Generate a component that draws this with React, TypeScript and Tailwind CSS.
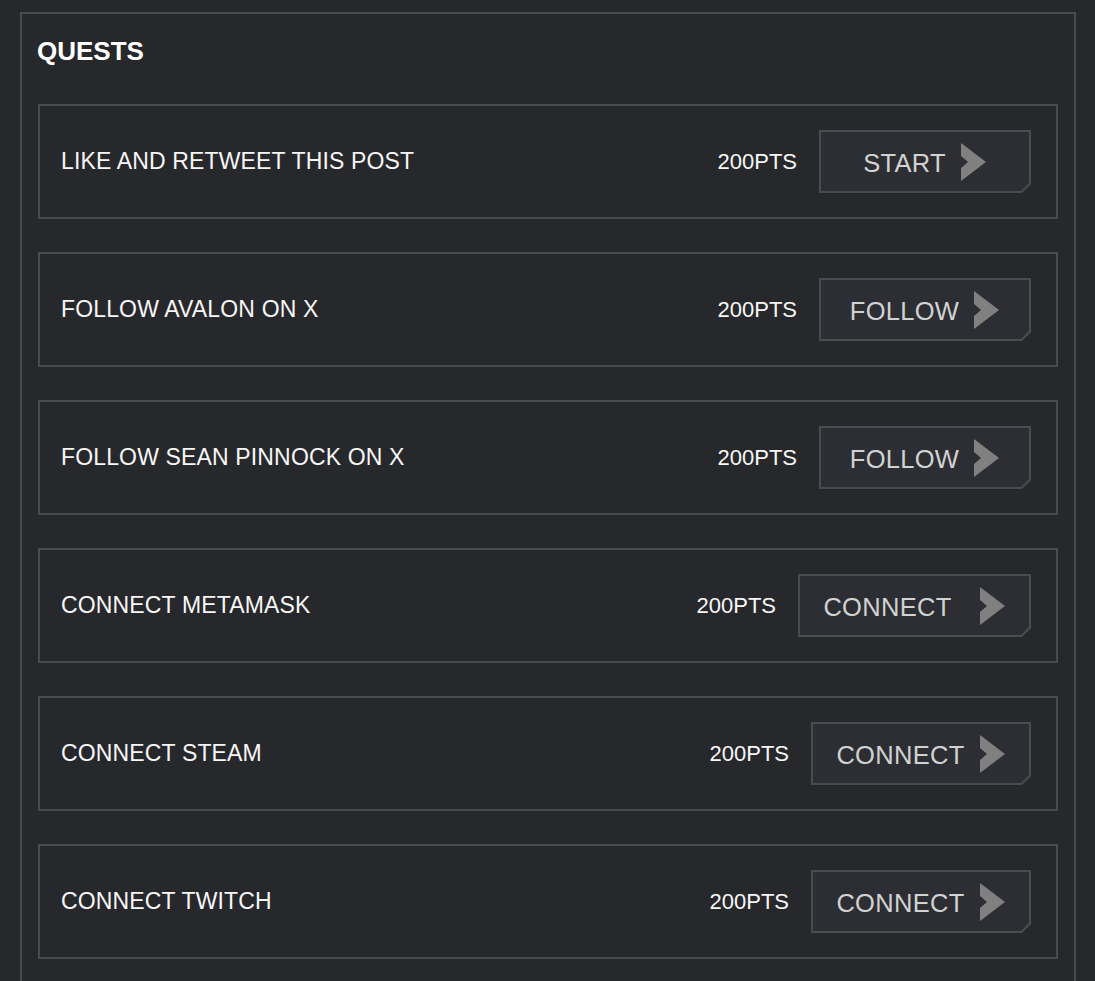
interface Quest {
  title: string;
  points: string;
  action: string;
  width: string;
  gap: string;
}

const quests: Quest[] = [
  { title: "LIKE AND RETWEET THIS POST", points: "200PTS", action: "START", width: "w-[212px]", gap: "gap-[15px]" },
  { title: "FOLLOW AVALON ON X", points: "200PTS", action: "FOLLOW", width: "w-[212px]", gap: "gap-[15px]" },
  { title: "FOLLOW SEAN PINNOCK ON X", points: "200PTS", action: "FOLLOW", width: "w-[212px]", gap: "gap-[15px]" },
  { title: "CONNECT METAMASK", points: "200PTS", action: "CONNECT", width: "w-[233px]", gap: "gap-[28px]" },
  { title: "CONNECT STEAM", points: "200PTS", action: "CONNECT", width: "w-[220px]", gap: "gap-[15px]" },
  { title: "CONNECT TWITCH", points: "200PTS", action: "CONNECT", width: "w-[220px]", gap: "gap-[15px]" },
];

function Arrow() {
  return (
    <svg width="26" height="38" viewBox="0 0 26 38" className="shrink-0">
      <polygon points="0,0 25,19 0,38 0,25 7,19 0,13" fill="#808080" />
    </svg>
  );
}

function QuestButton({ quest }: { quest: Quest }) {
  return (
    <button
      className={`${quest.width} h-[63px] shrink-0 bg-[#4a4b4f] p-[2px] [clip-path:polygon(0_0,100%_0,100%_calc(100%_-_9px),calc(100%_-_9px)_100%,0_100%)]`}
    >
      <div
        className={`flex h-full w-full items-center justify-center ${quest.gap} bg-[#2c2e33] [clip-path:polygon(0_0,100%_0,100%_calc(100%_-_8px),calc(100%_-_8px)_100%,0_100%)]`}
      >
        <span className="pt-[4px] text-[25.5px] leading-none tracking-[0.3px] text-[#d2d2d2]">{quest.action}</span>
        <Arrow />
      </div>
    </button>
  );
}

function QuestRow({ quest }: { quest: Quest }) {
  return (
    <div className="flex h-[115px] items-center border-2 border-[#4a4b4f] pl-[21px] pr-[25px]">
      <span className="flex-1 text-[23px] leading-none tracking-[0.15px] text-[#f7f7f7]">{quest.title}</span>
      <span className="mr-[22px] text-[22px] leading-none text-[#f7f7f7]">{quest.points}</span>
      <QuestButton quest={quest} />
    </div>
  );
}

export default function App() {
  return (
    <div
      className="min-h-[981px] bg-[#27282c] pl-[20px] pr-[19px] pt-[12px]"
      style={{ fontFamily: '"Liberation Sans", Arial, sans-serif' }}
    >
      <div className="border-2 border-[#4a4b4f] px-4 pt-[24px] pb-10">
        <h2 className="-ml-px mb-[40px] text-[26px] font-bold leading-none text-white">QUESTS</h2>
        <div className="flex flex-col gap-[33px]">
          {quests.map((q) => (
            <QuestRow key={q.title} quest={q} />
          ))}
        </div>
      </div>
    </div>
  );
}
